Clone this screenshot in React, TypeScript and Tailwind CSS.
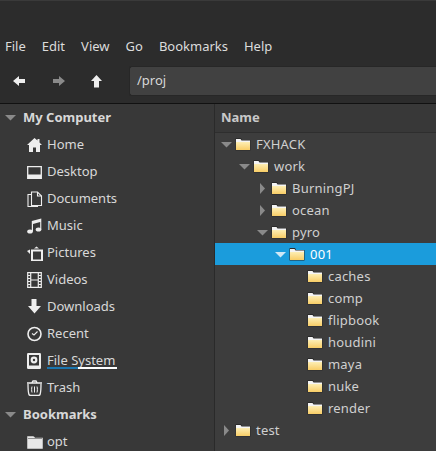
import type { ReactNode } from "react";

const FONT = "font-['Noto_Sans','Open_Sans',sans-serif]";

function Arrow({ dir, color = "#8a8a8a" }: { dir: "down" | "right"; color?: string }) {
  return (
    <svg width="11" height="11" viewBox="0 0 11 11" className="shrink-0">
      {dir === "down" ? (
        <path d="M0 3h11L5.500 8.500z" fill={color} />
      ) : (
        <path d="M3 0v11l5-5.500z" fill={color} />
      )}
    </svg>
  );
}

function Folder() {
  return (
    <svg width="16" height="14" viewBox="0 0 16 14" className="shrink-0">
      <defs>
        <linearGradient id="fold" x1="0" y1="0" x2="0" y2="1">
          <stop offset="0" stopColor="#fdeeb4" />
          <stop offset="1" stopColor="#f8cd66" />
        </linearGradient>
      </defs>
      <path d="M.5 13.500V1.500l.5-.5h5l1 2h8.500v10.500z" fill="#2a2a2a" />
      <path d="M1 4V2h4.500l1 1.500H15V5H1z" fill="#f4f4f4" />
      <rect x="1" y="5" width="14" height="8" fill="url(#fold)" />
    </svg>
  );
}

const paths: Record<string, ReactNode> = {
  home: <path d="M7.500 1 0 8h2v7h4v-4.500h3V15h4V8h2l-2.500-2.500V2h-2v1.500z" fill="#eee" />,
  desktop: (
    <g>
      <path d="M.7 2.700h13.600v11.600H.7z" fill="none" stroke="#eee" strokeWidth="1.300" />
      <path d="M1 10.500h13V14H1z" fill="#eee" />
    </g>
  ),
  docs: (
    <g fill="none" stroke="#eee" strokeWidth="1.100">
      <path d="M4.500 1h6l4 4v9.500h-10z" />
      <path d="M4.500 3.500H1v12h9.500v-1" />
      <path d="M10.500 1v4h4" />
    </g>
  ),
  music: (
    <g fill="#eee">
      <ellipse cx="3" cy="13.500" rx="2.800" ry="2" />
      <ellipse cx="11.500" cy="11.500" rx="2.800" ry="2" />
      <path d="M4.800 13.500V3L14.300.5v11h-1.100V4L6 6v7.500z" />
    </g>
  ),
  pictures: (
    <g>
      <path d="M5 5.500h10v10H5z" fill="none" stroke="#eee" strokeWidth="2" />
      <path d="M7 3.500 9.500 1.500 12 3.500z" fill="#eee" />
      <path d="M3 4.500 0 6l3 3z" fill="#eee" />
    </g>
  ),
  videos: (
    <g>
      <path d="M.7.700h13.600v14.600H.7zM3.700.700v14.600M11.300.700v14.600M3.700 8h7.600" fill="none" stroke="#eee" strokeWidth="1.200" />
      <path d="M1 3.500h2.500M1 6.500h2.500M1 9.500h2.500M1 12.500h2.500M11.500 3.500H14M11.500 6.500H14M11.500 9.500H14M11.500 12.500H14" stroke="#eee" />
    </g>
  ),
  downloads: <path d="M4.500 0h5v7H14l-6.500 7.500L1 7h3.500z" fill="#eee" />,
  recent: (
    <g fill="none" stroke="#eee">
      <circle cx="7.500" cy="8" r="6.500" strokeWidth="1.600" />
      <path d="M5 7.500 7 9 10.500 5.500" strokeWidth="1.100" />
    </g>
  ),
  filesystem: (
    <g>
      <rect x="0" y="0" width="14" height="16" rx="1.200" fill="#eee" />
      <rect x="2" y="2" width="10" height="10.500" fill="#383838" />
      <circle cx="7" cy="7" r="3.400" fill="#eee" />
      <circle cx="7" cy="7" r="1.200" fill="#383838" />
    </g>
  ),
  trash: (
    <g fill="none" stroke="#eee">
      <path d="M0 3h15M5 2.500 6 1h3l1 1.500" strokeWidth="1.300" />
      <path d="M1 4c0 3 0 7 .8 10 .2 1 1 1.500 2 1.500h7.400c1 0 1.800-.5 2-1.500.8-3 .8-7 .8-10" strokeWidth="1.300" />
      <path d="M5 6.500c-.5 2-.5 4 0 6M7.500 6.500v6M10 6.500c.5 2 .5 4 0 6" strokeWidth="1" />
    </g>
  ),
  opt: (
    <path d="M0 15V2.500l.5-.5h6L8 3.500h7.500l.5.500V15zM1 4.500h14" fill="#e8e8e8" stroke="#383838" strokeWidth=".500" />
  ),
};

function SideIcon({ name }: { name: string }) {
  return (
    <svg width="16" height="16" viewBox="0 0 16 16" className="shrink-0">
      {paths[name]}
    </svg>
  );
}

const places = [
  { icon: "home", label: "Home" },
  { icon: "desktop", label: "Desktop" },
  { icon: "docs", label: "Documents" },
  { icon: "music", label: "Music" },
  { icon: "pictures", label: "Pictures" },
  { icon: "videos", label: "Videos" },
  { icon: "downloads", label: "Downloads" },
  { icon: "recent", label: "Recent" },
  { icon: "filesystem", label: "File System" },
  { icon: "trash", label: "Trash" },
];

const tree: { label: string; depth: number; arrow?: "down" | "right"; selected?: boolean }[] = [
  { label: "FXHACK", depth: 0, arrow: "down" },
  { label: "work", depth: 1, arrow: "down" },
  { label: "BurningPJ", depth: 2, arrow: "right" },
  { label: "ocean", depth: 2, arrow: "right" },
  { label: "pyro", depth: 2, arrow: "down" },
  { label: "001", depth: 3, arrow: "down", selected: true },
  { label: "caches", depth: 4 },
  { label: "comp", depth: 4 },
  { label: "flipbook", depth: 4 },
  { label: "houdini", depth: 4 },
  { label: "maya", depth: 4 },
  { label: "nuke", depth: 4 },
  { label: "render", depth: 4 },
  { label: "test", depth: 0, arrow: "right" },
];

const indents = ["pl-[6px]", "pl-[24px]", "pl-[42px]", "pl-[60px]", "pl-[78px]"];

function SideRow({ icon, label }: { icon: string; label: string }) {
  return (
    <div className="flex h-[27px] items-center gap-[4px] pl-[27px] text-[#d8d8d8]">
      <SideIcon name={icon} />
      {label === "File System" ? (
        <span className="relative">
          {label}
          <span className="absolute bottom-[1px] left-0 flex h-[2px] w-[70px]">
            <span className="w-[31px] bg-[#1b75ae]" />
            <span className="flex-1 bg-white" />
          </span>
        </span>
      ) : (
        <span>{label}</span>
      )}
    </div>
  );
}

function SideHeading({ label }: { label: string }) {
  return (
    <div className="flex h-[27px] items-center gap-[7px] pl-[5px] font-bold text-[#d8d8d8]">
      <Arrow dir="down" />
      <span>{label}</span>
    </div>
  );
}

export default function App() {
  return (
    <div className={`flex h-[451px] w-[436px] flex-col overflow-hidden bg-[#2c2c2c] text-[13px] ${FONT}`}>
      <div className="h-[33px] shrink-0 border-t border-[#3a3a3a]" />
      <nav className="flex h-[27px] shrink-0 items-center gap-[16px] pl-[5px] text-[#dcdcdc]">
        {["File", "Edit", "View", "Go", "Bookmarks", "Help"].map((m) => (
          <span key={m}>{m}</span>
        ))}
      </nav>
      <div className="flex h-[44px] shrink-0 items-start border-b border-[#111] pt-[6px]">
        <div className="flex h-[30px] w-[129px] shrink-0 items-center gap-[26px] pl-[13px]">
          <svg width="13" height="12" viewBox="0 0 13 12"><path d="M0 6 6 1v3h6v4H6v3z" fill="#eee" /></svg>
          <svg width="13" height="12" viewBox="0 0 13 12"><path d="M13 6 7 1v3H1v4h6v3z" fill="#8a8a8a" /></svg>
          <svg width="11" height="13" viewBox="0 0 11 13"><path d="M5.500 0l5.500 6H8v6.500H3V6H0z" fill="#eee" /></svg>
        </div>
        <div className="flex h-[30px] flex-1 items-center rounded-l-[3px] border border-r-0 border-[#272727] bg-[#414141] pl-[7px] text-[#d8d8d8]">
          /proj
        </div>
      </div>
      <div className="flex min-h-0 flex-1">
        <aside className="w-[215px] shrink-0 border-r border-[#2a2a2a] bg-[#383838]">
          <SideHeading label="My Computer" />
          {places.map((p) => (
            <SideRow key={p.label} icon={p.icon} label={p.label} />
          ))}
          <SideHeading label="Bookmarks" />
          <SideRow icon="opt" label="opt" />
        </aside>
        <main className="min-w-0 flex-1 bg-[#3d3d3d]">
          <div className="flex h-[29px] items-center border-b border-[#2e2e2e] bg-[#383838] pl-[6px] font-bold text-[#c8c8c8]">
            Name
          </div>
          {tree.map((t) => (
            <div
              key={t.label}
              className={`flex h-[22px] items-center ${indents[t.depth]} ${t.selected ? "bg-[#1b9cdc] text-white" : "text-[#d0d0d0]"}`}
            >
              <span className="w-[11px] shrink-0">
                {t.arrow && <Arrow dir={t.arrow} color={t.selected ? "#cfe8f6" : "#8a8a8a"} />}
              </span>
              <span className="ml-[3px] mr-[5px] flex">
                <Folder />
              </span>
              <span className="pt-[1px] tracking-[0.2px]">{t.label}</span>
            </div>
          ))}
        </main>
      </div>
    </div>
  );
}
